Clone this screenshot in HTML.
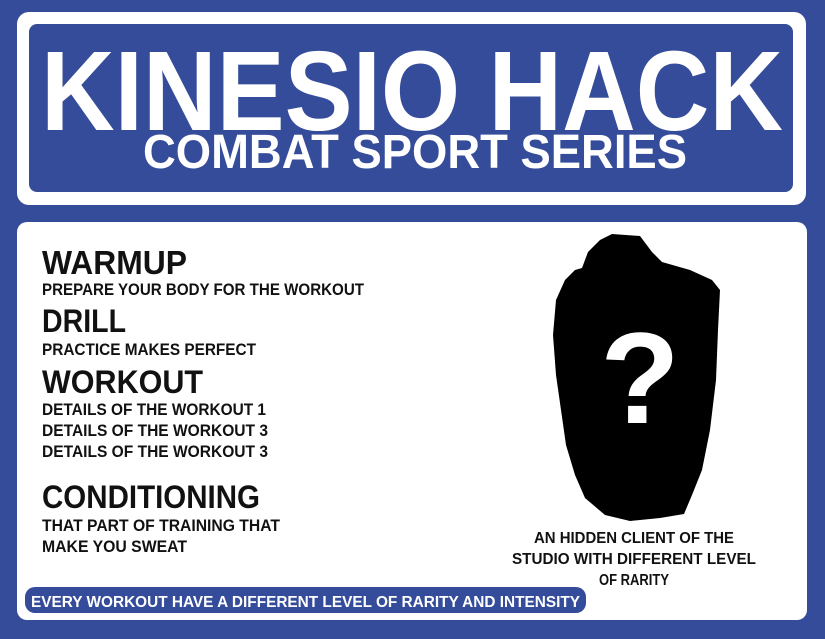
<!DOCTYPE html>
<html><head><meta charset="utf-8"><style>
html,body{margin:0;padding:0;background:#354c9a;}
svg{display:block}
text{font-family:"Liberation Sans",sans-serif;font-weight:bold;}
</style></head><body>
<svg width="825" height="639" viewBox="0 0 825 639" xmlns="http://www.w3.org/2000/svg">
<rect width="825" height="639" fill="#354c9a"/>
<rect x="17" y="12" width="789" height="193" rx="12" fill="#fff"/>
<rect x="29" y="24" width="764" height="168" rx="8" fill="#354c9a"/>
<text x="41" y="130" font-size="113" fill="#fff" textLength="742" lengthAdjust="spacingAndGlyphs">KINESIO HACK</text>
<text x="143" y="168" font-size="48" fill="#fff" textLength="544" lengthAdjust="spacingAndGlyphs">COMBAT SPORT SERIES</text>

<rect x="17" y="222" width="790" height="398" rx="10" fill="#fff"/>
<g fill="#111">
<text x="42" y="274" font-size="33" textLength="145" lengthAdjust="spacingAndGlyphs">WARMUP</text>
<text x="42" y="295" font-size="17" textLength="322" lengthAdjust="spacingAndGlyphs">PREPARE YOUR BODY FOR THE WORKOUT</text>
<text x="42" y="332" font-size="32" textLength="84" lengthAdjust="spacingAndGlyphs">DRILL</text>
<text x="42" y="355" font-size="17" textLength="214" lengthAdjust="spacingAndGlyphs">PRACTICE MAKES PERFECT</text>
<text x="42" y="393" font-size="32" textLength="161" lengthAdjust="spacingAndGlyphs">WORKOUT</text>
<text x="42" y="415" font-size="17" textLength="224" lengthAdjust="spacingAndGlyphs">DETAILS OF THE WORKOUT 1</text>
<text x="42" y="436" font-size="17" textLength="226" lengthAdjust="spacingAndGlyphs">DETAILS OF THE WORKOUT 3</text>
<text x="42" y="457" font-size="17" textLength="226" lengthAdjust="spacingAndGlyphs">DETAILS OF THE WORKOUT 3</text>
<text x="42" y="508" font-size="32" textLength="218" lengthAdjust="spacingAndGlyphs">CONDITIONING</text>
<text x="42" y="531" font-size="17" textLength="238" lengthAdjust="spacingAndGlyphs">THAT PART OF TRAINING THAT</text>
<text x="42" y="552" font-size="17" textLength="145" lengthAdjust="spacingAndGlyphs">MAKE YOU SWEAT</text>
</g>
<path fill="#000" d="M582,268 L588,252 L600,240 L612,234 L640,236 L652,252 L662,262 L690,270 L712,280 L720,290 L718,330 L716,380 L710,430 L702,470 L692,495 L684,514 L660,518 L630,521 L605,515 L585,498 L575,475 L566,445 L561,410 L556,375 L553,335 L556,300 L565,280 L575,270 Z"/>
<text x="640" y="423" font-size="130" fill="#fff" text-anchor="middle">?</text>
<g fill="#111" text-anchor="middle">
<text x="634" y="543" font-size="16" textLength="200" lengthAdjust="spacingAndGlyphs">AN HIDDEN CLIENT OF THE</text>
<text x="634" y="564" font-size="16" textLength="244" lengthAdjust="spacingAndGlyphs">STUDIO WITH DIFFERENT LEVEL</text>
<text x="634" y="585" font-size="16" textLength="70" lengthAdjust="spacingAndGlyphs">OF RARITY</text>
</g>
<rect x="25" y="587" width="561" height="26" rx="10" fill="#354c9a"/>
<text x="31" y="607" font-size="16" fill="#fff" textLength="549" lengthAdjust="spacingAndGlyphs">EVERY WORKOUT HAVE A DIFFERENT LEVEL OF RARITY AND INTENSITY</text>
</svg>
</body></html>
